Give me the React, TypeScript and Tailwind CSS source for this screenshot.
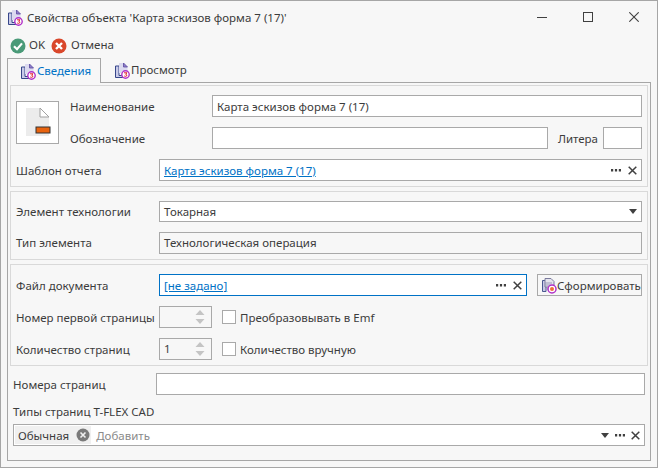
import React from "react";

const textColor = "text-[#3c3c3c]";

const DocIcon = ({ className = "" }: { className?: string }) => (
  <svg width="16" height="17" viewBox="0 0 16 17" className={className}>
    <path d="M1.5 4H5V13.5H9V15.5H1.5Z" fill="#c9cbe8" stroke="#37468a" strokeWidth="1" />
    <path d="M5 1H9.5L13.5 5V11H5Z" fill="#dcdaf0" />
    <path d="M9.5 1V5H13.5Z" fill="#8f7fc8" stroke="#5a4aa0" strokeWidth=".8" />
    <circle cx="11.5" cy="12.5" r="3.7" fill="#fff" stroke="#b02fc8" strokeWidth="1.4" />
    <path d="M10 10.8H13L11.6 12.3Q13.2 12.6 12.8 13.8Q11.8 14.8 10.2 14" fill="none" stroke="#e0202c" strokeWidth="1" />
  </svg>
);

const GenerateIcon = () => (
  <svg width="16" height="17" viewBox="0 0 16 17">
    <path d="M1.5 3.5H5V14.5H1.5Z" fill="#c9cbe8" stroke="#4a5890" strokeWidth="1" />
    <path d="M4 1.5H10L13 4.5V10H4Z" fill="#e4e4ee" stroke="#7a7a9c" strokeWidth="1" />
    <path d="M4 6H11M4 8H9M4 12H7" stroke="#9a9ab8" strokeWidth="1" />
    <circle cx="11" cy="12" r="4" fill="#fff" stroke="#b02fc8" strokeWidth="1.5" />
    <circle cx="11" cy="12" r="2" fill="#f0703a" />
  </svg>
);

const OkIcon = () => (
  <svg width="16" height="16" viewBox="0 0 16 16">
    <circle cx="8" cy="8" r="7.5" fill="#4a9a78" />
    <path d="M4 8.2L7 11.2L12 5.4" fill="none" stroke="#fff" strokeWidth="2.2" />
  </svg>
);

const CancelIcon = () => (
  <svg width="16" height="16" viewBox="0 0 16 16">
    <circle cx="8" cy="8" r="7.5" fill="#d9472b" />
    <path d="M5 5L11 11M11 5L5 11" fill="none" stroke="#fff" strokeWidth="2.4" />
  </svg>
);

const Dots = () => (
  <svg width="10" height="3" viewBox="0 0 10 3">
    <path d="M0 0h2.2v2.4H0zM3.9 0h2.2v2.4H3.9zM7.8 0H10v2.4H7.8z" fill="#404040" />
  </svg>
);

const Cross = () => (
  <svg width="9" height="9" viewBox="0 0 9 9">
    <path d="M.7.7L8.3 8.3M8.3.7L.7 8.3" fill="none" stroke="#404040" strokeWidth="1.5" />
  </svg>
);

const Caret = () => (
  <svg width="8" height="5" viewBox="0 0 8 5">
    <path d="M0 0H8L4 5Z" fill="#404040" />
  </svg>
);

const Label = ({ children, className = "" }: { children: React.ReactNode; className?: string }) => (
  <span className={`whitespace-nowrap pt-[1px] ${textColor} ${className}`}>{children}</span>
);

const Box = ({ children, className = "" }: { children?: React.ReactNode; className?: string }) => (
  <div className={`flex h-[22px] items-center border border-[#a9a9a9] px-[4px] ${className}`}>{children}</div>
);

const Spinner = ({ value }: { value?: string }) => (
  <div className="flex h-[22px] w-[53px] shrink-0 items-center justify-between border border-[#a9a9a9] bg-[#f7f7f7] pl-[4px] pr-[6px]">
    <span className={textColor}>{value}</span>
    <svg width="10" height="16" viewBox="0 0 10 16">
      <path d="M5 1L9.5 6H.5Z" fill="#c4c4c4" />
      <path d="M.5 10H9.5L5 15Z" fill="#c4c4c4" />
    </svg>
  </div>
);

const Check = ({ label }: { label: string }) => (
  <div className="ml-[10px] flex items-center gap-[4px]">
    <div className="h-[14px] w-[14px] border border-[#a9a9a9] bg-white" />
    <Label>{label}</Label>
  </div>
);

export default function App() {
  return (
    <div className="h-[468px] w-[658px] overflow-hidden border border-[#a6a6a6] bg-[#f7f7f7] text-[11.5px] leading-[16px]" style={{ fontFamily: '"Noto Sans", sans-serif' }}>
      {/* title bar */}
      <div className="flex h-[32px] items-center pl-[6px]">
        <DocIcon />
        <span className={`ml-[4px] pt-[1px] ${textColor}`}>Свойства объекта 'Карта эскизов форма 7 (17)'</span>
        <div className="ml-auto flex items-center gap-[36px] pr-[18px]">
          <div className="h-px w-[10px] bg-[#404040]" />
          <div className="h-[10px] w-[10px] border border-[#404040]" />
          <svg width="10" height="10" viewBox="0 0 10 10">
            <path d="M.3.3L9.7 9.7M9.7.3L.3 9.7" stroke="#404040" strokeWidth="1.1" />
          </svg>
        </div>
      </div>

      {/* toolbar */}
      <div className="flex h-[25px] items-center pl-[9px]">
        <OkIcon />
        <span className={`ml-[3px] pb-[1px] ${textColor}`}>OK</span>
        <div className="ml-[6px]"><CancelIcon /></div>
        <span className={`ml-[4px] pb-[1px] ${textColor}`}>Отмена</span>
      </div>

      {/* tabs */}
      <div className="relative z-10 flex h-[24px] pl-[6px]">
        <div className="flex h-[25px] w-[94px] items-center border border-b-0 border-[#a6a6a6] bg-[#f7f7f7] pl-[12px]">
          <DocIcon />
          <span className="ml-[1px] text-[#0072c6]">Сведения</span>
        </div>
        <div className="flex items-center pl-[13px]">
          <DocIcon />
          <span className={`ml-[1px] ${textColor}`}>Просмотр</span>
        </div>
      </div>

      {/* panel */}
      <div className="mx-[6px] flex h-[379px] w-[644px] flex-col border border-[#a6a6a6] p-[2px]">
        <div className="border border-[#d9d9d9] px-[5px] pb-[5px] pt-[9px]">
          <div className="flex items-center">
            <div className="flex h-[43px] w-[43px] shrink-0 items-center justify-center border border-[#a9a9a9] bg-white">
              <svg width="26" height="30" viewBox="0 0 26 30">
                <path d="M1 1H15L24 10V29H1Z" fill="#ececec" />
                <path d="M15 1L24 10H15Z" fill="#fff" stroke="#a0a0a0" />
                <rect x="11" y="20" width="14" height="6" fill="#e8630f" stroke="#333" />
              </svg>
            </div>
            <div className="flex flex-1 flex-col gap-[10px] pl-[11px]">
              <div className="flex items-center">
                <Label className="w-[142px]">Наименование</Label>
                <Box className="flex-1 bg-white"><Label>Карта эскизов форма 7 (17)</Label></Box>
              </div>
              <div className="flex items-center">
                <Label className="w-[142px]">Обозначение</Label>
                <Box className="flex-1 bg-white" />
                <Label className="ml-[10px]">Литера</Label>
                <Box className="ml-[5px] w-[39px] bg-white" />
              </div>
            </div>
          </div>
          <div className="mt-[10px] flex items-center">
            <Label className="w-[143px]">Шаблон отчета</Label>
            <Box className="flex-1 bg-white">
              <a className="pt-[1px] text-[#0072c6] underline">Карта эскизов форма 7 (17)</a>
              <div className="ml-auto flex items-center gap-[7px]"><Dots /><Cross /></div>
            </Box>
          </div>
        </div>

        <div className="mt-[4px] border border-[#d9d9d9] px-[5px] pb-[5px] pt-[9px]">
          <div className="flex items-center">
            <span className={`w-[143px] whitespace-nowrap ${textColor}`}>Элемент технологии</span>
            <div className="flex h-[21px] flex-1 items-center border border-[#a9a9a9] bg-white px-[4px]">
              <span className={textColor}>Токарная</span>
              <div className="ml-auto flex"><Caret /></div>
            </div>
          </div>
          <div className="mt-[10px] flex items-center">
            <span className={`w-[143px] whitespace-nowrap ${textColor}`}>Тип элемента</span>
            <Box className="flex-1"><span className={textColor}>Технологическая операция</span></Box>
          </div>
        </div>

        <div className="mt-[4px] border border-[#d9d9d9] px-[5px] pb-[5px] pt-[9px]">
          <div className="flex items-center">
            <Label className="w-[143px]">Файл документа</Label>
            <div className="flex h-[22px] flex-1 items-center border border-[#0072c6] bg-white px-[4px]">
              <a className="pt-[1px] text-[#0072c6] underline">[не задано]</a>
              <div className="ml-auto flex items-center gap-[7px]"><Dots /><Cross /></div>
            </div>
            <div className="ml-[10px] flex h-[22px] w-[105px] items-center border border-[#a9a9a9] pl-[3px]">
              <GenerateIcon />
              <Label>Сформировать</Label>
            </div>
          </div>
          <div className="mt-[10px] flex items-center">
            <Label className="w-[143px]">Номер первой страницы</Label>
            <Spinner />
            <Check label="Преобразовывать в Emf" />
          </div>
          <div className="mt-[10px] flex items-center">
            <Label className="w-[143px]">Количество страниц</Label>
            <Spinner value="1" />
            <Check label="Количество вручную" />
          </div>
        </div>

        <div className="mt-[7px] flex items-center px-[3px]">
          <Label className="w-[143px]">Номера страниц</Label>
          <Box className="flex-1 bg-white" />
        </div>
        <Label className="mt-[8px] px-[3px]">Типы страниц T-FLEX CAD</Label>
        <div className="mx-[3px] mt-[4px] flex h-[22px] items-center border border-[#a9a9a9] bg-white pl-[1px] pr-[4px]">
          <div className="flex h-[18px] items-center gap-[7px] bg-[#f0f0f0] pl-[3px] pr-[1px]">
            <Label>Обычная</Label>
            <svg width="14" height="14" viewBox="0 0 14 14">
              <circle cx="7" cy="7" r="6.5" fill="#7a7a7a" />
              <path d="M4.5 4.5L9.5 9.5M9.5 4.5L4.5 9.5" stroke="#f0f0f0" strokeWidth="1.6" />
            </svg>
          </div>
          <span className="ml-[5px] pt-[1px] text-[#8a8a8a]">Добавить</span>
          <div className="ml-auto flex items-center gap-[6px]"><Caret /><Dots /><Cross /></div>
        </div>
      </div>
    </div>
  );
}
